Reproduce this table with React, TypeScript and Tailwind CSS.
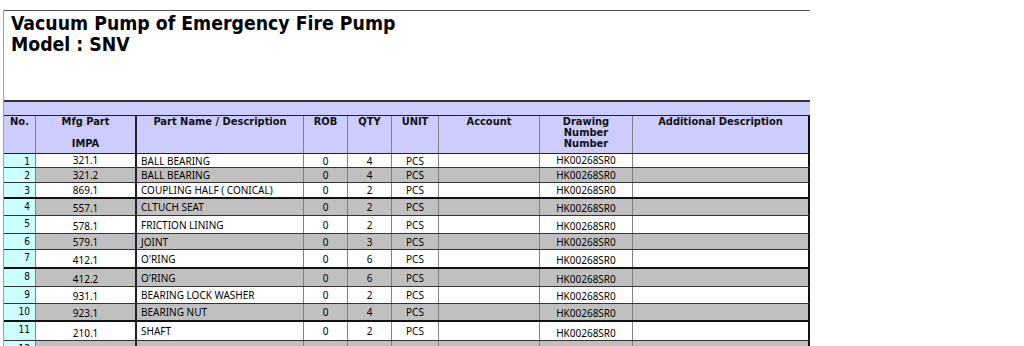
import React from 'react';

type Row = {
  no: number;
  mfg: string;
  name: string;
  rob: string;
  qty: string;
  unit: string;
  drawing: string;
  h: number;
  thick?: boolean;
};

const rows: Row[] = [
  { no: 1, mfg: '321.1', name: 'BALL BEARING', rob: '0', qty: '4', unit: 'PCS', drawing: 'HK00268SR0', h: 14 },
  { no: 2, mfg: '321.2', name: 'BALL BEARING', rob: '0', qty: '4', unit: 'PCS', drawing: 'HK00268SR0', h: 15 },
  { no: 3, mfg: '869.1', name: 'COUPLING HALF ( CONICAL)', rob: '0', qty: '2', unit: 'PCS', drawing: 'HK00268SR0', h: 16, thick: true },
  { no: 4, mfg: '557.1', name: 'CLTUCH SEAT', rob: '0', qty: '2', unit: 'PCS', drawing: 'HK00268SR0', h: 17 },
  { no: 5, mfg: '578.1', name: 'FRICTION LINING', rob: '0', qty: '2', unit: 'PCS', drawing: 'HK00268SR0', h: 18 },
  { no: 6, mfg: '579.1', name: 'JOINT', rob: '0', qty: '3', unit: 'PCS', drawing: 'HK00268SR0', h: 16 },
  { no: 7, mfg: '412.1', name: "O'RING", rob: '0', qty: '6', unit: 'PCS', drawing: 'HK00268SR0', h: 19, thick: true },
  { no: 8, mfg: '412.2', name: "O'RING", rob: '0', qty: '6', unit: 'PCS', drawing: 'HK00268SR0', h: 18 },
  { no: 9, mfg: '931.1', name: 'BEARING LOCK WASHER', rob: '0', qty: '2', unit: 'PCS', drawing: 'HK00268SR0', h: 17 },
  { no: 10, mfg: '923.1', name: 'BEARING NUT', rob: '0', qty: '4', unit: 'PCS', drawing: 'HK00268SR0', h: 18, thick: true },
  { no: 11, mfg: '210.1', name: 'SHAFT', rob: '0', qty: '2', unit: 'PCS', drawing: 'HK00268SR0', h: 19 },
  { no: 12, mfg: '', name: '', rob: '', qty: '', unit: '', drawing: '', h: 20 },
];

const head = "font-['DejaVu_Sans_Condensed','DejaVu_Sans',sans-serif] font-bold text-[11px] leading-[11px] text-[#111]";

const App = () => {
  return (
    <div className="w-[1024px] h-[346px] overflow-hidden bg-white">
      <div className="ml-[3px] mt-[10px] w-[807px] border-l border-[#a0a0a0]">
        {/* title box */}
        <div className="h-[92px] border-t border-t-[#555] border-b-2 border-b-[#333] pl-[7px] pt-[2px]">
          <h1 className="font-['DejaVu_Sans_Condensed','DejaVu_Sans',sans-serif] font-bold text-[19.3px] leading-[21px] text-black">
            Vacuum Pump of Emergency Fire Pump
            <br />
            Model : SNV
          </h1>
        </div>
        <div className="h-[13px] bg-[#ccccff]" />

        {/* header */}
        <div className={`flex h-[39px] bg-[#ccccff] border-t border-b border-[#222] ${head}`}>
          <div className="w-[32px] border-r border-[#808080] text-center">No.</div>
          <div className="w-[101px] border-r-2 border-[#222] text-center">
            Mfg Part
            <br />
            <br />
            IMPA
          </div>
          <div className="w-[167px] border-r border-[#808080] text-center">Part Name / Description</div>
          <div className="w-[44px] border-r border-[#808080] text-center">ROB</div>
          <div className="w-[44px] border-r border-[#808080] text-center">QTY</div>
          <div className="w-[47px] border-r border-[#808080] text-center">UNIT</div>
          <div className="w-[101px] border-r border-[#808080] text-center">Account</div>
          <div className="w-[93px] border-r border-[#808080] text-center">
            Drawing
            <br />
            Number
            <br />
            Number
          </div>
          <div className="w-[177px] border-r-2 border-[#111] text-center">Additional Description</div>
        </div>

        {/* rows */}
        {rows.map((r) => {
          const bg = r.no % 2 === 0 ? 'bg-[#c0c0c0]' : 'bg-white';
          return (
            <div
              key={r.no}
              className={`flex ${bg} ${r.thick ? 'border-b-2 border-[#111]' : 'border-b border-[#333]'} font-['Noto_Sans',sans-serif] text-[10px] leading-[12px] text-black`}
              style={{ height: r.h }}
            >
              <div className="w-[32px] bg-[#ccffff] border-r border-[#808080] text-right pr-[5px] pt-[2px] font-['DejaVu_Sans_Condensed','DejaVu_Sans',sans-serif] text-[10px]">
                {r.no}
              </div>
              <div className="w-[101px] border-r-2 border-[#222] flex items-end justify-center pb-[1px]">{r.mfg}</div>
              <div className="w-[167px] border-r border-[#808080] flex items-center pl-[4px]">{r.name}</div>
              <div className="w-[44px] border-r border-[#808080] flex items-center justify-center">{r.rob}</div>
              <div className="w-[44px] border-r border-[#808080] flex items-center justify-center">{r.qty}</div>
              <div className="w-[47px] border-r border-[#808080] flex items-center justify-center">{r.unit}</div>
              <div className="w-[101px] border-r border-[#808080]" />
              <div className="w-[93px] border-r border-[#808080] flex items-end justify-center pb-[1px]">{r.drawing}</div>
              <div className="w-[177px] border-r-2 border-[#111]" />
            </div>
          );
        })}
      </div>
    </div>
  );
};

export default App;
